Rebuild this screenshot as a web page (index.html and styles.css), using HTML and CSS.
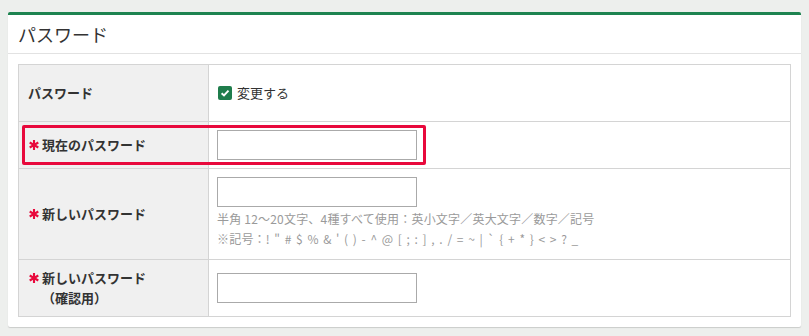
FILE: index.html
```html
<!doctype html>
<html lang="ja">
<head>
    <meta charset="UTF-8">
    <meta name="viewport" content="width=device-width, initial-scale=1.0">
    <title>パスワード</title>
    <link rel="stylesheet" href="styles.css">
</head>
<body>
    <div class="panel">
        <div class="panel-head">
            <h2>パスワード</h2>
        </div>
        <div class="panel-body">
            <div class="form-table">
                <div class="th tall"><div class="th-in"><span class="lbl">パスワード</span></div></div>
                <div class="td tall">
                    <label class="check">
                        <span class="check-box">
                            <svg width="10" height="10" viewBox="0 0 10 10"><path d="M1.6 5.2 L4 7.5 L8.5 2.6" fill="none" stroke="#fff" stroke-width="1.9"/></svg>
                        </span>
                        変更する
                    </label>
                </div>

                <div class="th"><div class="th-in"><span class="req"><svg width="10" height="10" viewBox="0 0 10 10"><path d="M5 0V10M0.7 2.5L9.3 7.5M0.7 7.5L9.3 2.5"/></svg></span><span class="lbl">現在のパスワード</span></div></div>
                <div class="td"><input class="text-input" type="password"></div>

                <div class="th"><div class="th-in"><span class="req"><svg width="10" height="10" viewBox="0 0 10 10"><path d="M5 0V10M0.7 2.5L9.3 7.5M0.7 7.5L9.3 2.5"/></svg></span><span class="lbl">新しいパスワード</span></div></div>
                <div class="td help-cell">
                    <input class="text-input" type="password">
                    <p class="help">半角 12〜20文字、4種すべて使用：英小文字／英大文字／数字／記号<br><span class="marks">※記号：! " # $ % &amp; ' ( ) - ^ @ [ ; : ] , . / = ~ | ` { + * } &lt; &gt; ? _</span></p>
                </div>

                <div class="th tall"><div class="th-in"><span class="req"><svg width="10" height="10" viewBox="0 0 10 10"><path d="M5 0V10M0.7 2.5L9.3 7.5M0.7 7.5L9.3 2.5"/></svg></span><span class="lbl">新しいパスワード<br>（確認用）</span></div></div>
                <div class="td tall"><input class="text-input" type="password"></div>

                <!-- 注目枠 -->
                <div class="mark"></div>
            </div>
        </div>
    </div>
</body>
</html>
```

FILE: styles.css
```css
*{
    margin:0;
    padding:0;
    box-sizing: border-box;
}
body{
    background-color: #edefed;
    padding: 12px 8px 9px;
    font-family: "Noto Sans CJK JP", "Noto Sans", sans-serif;
    color: #333;
}
.panel{
    background-color: #fff;
    border-top: 3px solid #1d8350;
    border-radius: 2px;
    box-shadow: 0 1px 1px rgba(0,0,0,0.15);
}
.panel-head{
    height: 39px;
    border-bottom: 1px solid #e2e2e2;
    padding-left: 10px;
    display: flex;
    align-items: center;
}
.panel-head h2{
    font-size: 18px;
    font-weight: normal;
    line-height: 24px;
    color: #333;
}
.panel-body{
    padding: 10px 10px 10px;
}
.form-table{
    position: relative;
    display: grid;
    grid-template-columns: 190px 1fr;
    border: 1px solid #d4d4d4;
    border-bottom: 0;
}
.th, .td{
    border-bottom: 1px solid #d4d4d4;
    display: flex;
    align-items: center;
}
.th{
    background-color: #f0f0f0;
    border-right: 1px solid #d4d4d4;
    padding: 0 9px;
    font-size: 13px;
    font-weight: bold;
    line-height: 20px;
}
.th-in{
    display: flex;
    align-items: flex-start;
}
.td{
    padding: 8px 8px;
}
.tall{
    min-height: 57px;
}
.help-cell{
    flex-direction: column;
    align-items: flex-start;
    padding-bottom: 10px;
}
.req{
    flex: none;
    width: 14px;
    padding-top: 5px;
    padding-left: 1px;
}
.req svg{
    display: block;
    stroke: #e8093c;
    stroke-width: 2.1;
}
.text-input{
    display: block;
    width: 200px;
    height: 30px;
    border: 1px solid #aaa;
    background: #fff;
    outline: none;
}
.help{
    margin-top: 2px;
    font-size: 12px;
    line-height: 20px;
    color: #9a9a9a;
    letter-spacing: 0.2px;
}
.help .marks{
    word-spacing: 1.6px;
}
.check{
    display: flex;
    align-items: center;
    font-size: 13px;
    line-height: 20px;
    color: #333;
}
.check-box{
    width: 14px;
    height: 14px;
    margin: 0 5px 0 1px;
    border-radius: 2px;
    background-color: #1f7d4c;
    display: flex;
    align-items: center;
    justify-content: center;
}
.check-box svg{
    display: block;
}
.mark{
    position: absolute;
    left: 3px;
    top: 60px;
    width: 404px;
    height: 40px;
    border: 3px solid #e8093c;
    border-radius: 2px;
    pointer-events: none;
}
```
